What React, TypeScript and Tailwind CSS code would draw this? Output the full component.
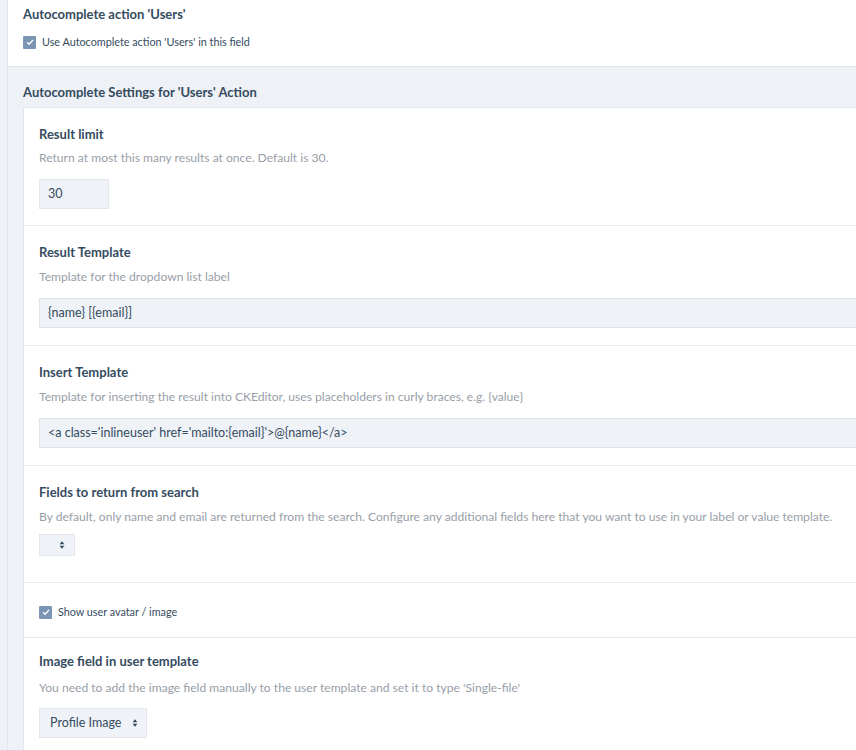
import type { ReactNode } from 'react'

const font = { fontFamily: 'Lato, "Liberation Sans", sans-serif' }

function Checkbox() {
  return (
    <span className="inline-flex h-[13px] w-[13px] shrink-0 items-center justify-center rounded-[1px] bg-[#7b96b3]">
      <svg viewBox="0 0 12 12" className="h-[10px] w-[10px]" fill="none" stroke="white" strokeWidth="1.6">
        <path d="M2.5 6.2 L5 8.6 L9.6 3.4" />
      </svg>
    </span>
  )
}

function Arrows() {
  return (
    <svg viewBox="0 0 8 12" className="h-[10px] w-[6px]" fill="#354b60">
      <path d="M4 1 L7.2 5 H0.8 Z" />
      <path d="M4 11 L7.2 7 H0.8 Z" />
    </svg>
  )
}

function Field({ label, desc, children, pt = 'pt-[16px]', descGap = 'mt-[5px]', pb = 'pb-[17px]' }: { label: string; desc: string; children: ReactNode; pt?: string; descGap?: string; pb?: string }) {
  return (
    <div className={`border-b border-[#e6e9ee] pl-[15px] ${pt} ${pb}`}>
      <div className="text-[13px] font-bold leading-5 text-[#354b60]">{label}</div>
      <div className={`${descGap} whitespace-nowrap text-[12.1px] leading-5 text-[#989ea8]`}>{desc}</div>
      <div className="mt-[11px]">{children}</div>
    </div>
  )
}

export default function App() {
  return (
    <div className="flex min-h-[750px] overflow-hidden bg-white text-[#354b60]" style={font}>
      <div className="w-2 shrink-0 border-r border-[#e2e6ec] bg-[#eef1f5]" />
      <div className="min-w-0 flex-1">
        <div className="border-b border-[#e2e6ec] pl-[15px] pt-[4px] pb-[14px]">
          <div className="text-[13px] font-bold leading-5">Autocomplete action 'Users'</div>
          <label className="mt-[8px] flex items-center gap-[6px] text-[10.8px] leading-5">
            <Checkbox />
            <span>Use Autocomplete action 'Users' in this field</span>
          </label>
        </div>
        <div className="bg-[#eef1f5] pl-[15px]">
          <div className="pt-[15px] pb-[5px] text-[13px] font-bold leading-5">Autocomplete Settings for 'Users' Action</div>
          <div className="border-l border-t border-[#e2e6ec] bg-white">
            <Field label="Result limit" desc="Return at most this many results at once. Default is 30." descGap="mt-[4px]" pb="pb-[16px]">
              <div className="flex h-[30px] w-[70px] items-center border border-[#e2e7ee] bg-[#eff2f7] pl-[8px] text-[12.5px]">30</div>
            </Field>
            <Field label="Result Template" desc="Template for the dropdown list label">
              <div className="flex h-[30px] items-center border border-r-0 border-[#dde4ec] bg-[#eff2f7] pl-[8px] text-[12.5px]">{'{name} [{email}]'}</div>
            </Field>
            <Field label="Insert Template" desc="Template for inserting the result into CKEditor, uses placeholders in curly braces, e.g. {value}">
              <div className="flex h-[30px] items-center border border-r-0 border-[#dde4ec] bg-[#eff2f7] pl-[8px] text-[12.5px]">{"<a class='inlineuser' href='mailto:{email}'>@{name}</a>"}</div>
            </Field>
            <Field label="Fields to return from search" desc="By default, only name and email are returned from the search. Configure any additional fields here that you want to use in your label or value template." descGap="mt-[5px]" pb="pb-[26px]">
              <div className="mt-[-4px] flex h-[22px] w-[36px] items-center justify-end border border-[#e2e7ee] bg-[#eff2f7] pr-[9px]">
                <Arrows />
              </div>
            </Field>
            <div className="border-b border-[#e6e9ee] pl-[15px] pt-[19px] pb-[15px]">
              <label className="flex items-center gap-[6px] text-[10.8px] leading-5">
                <Checkbox />
                <span>Show user avatar / image</span>
              </label>
            </div>
            <Field label="Image field in user template" desc="You need to add the image field manually to the user template and set it to type 'Single-file'" pt="pt-[13px]" descGap="mt-[7px]" pb="pb-[20px]">
              <div className="mt-[-1px] flex h-[30px] w-[108px] items-center justify-between border border-[#e2e7ee] bg-[#eff2f7] pl-[10px] pr-[8px] text-[12.5px]">
                <span>Profile Image</span>
                <Arrows />
              </div>
            </Field>
          </div>
        </div>
      </div>
    </div>
  )
}
